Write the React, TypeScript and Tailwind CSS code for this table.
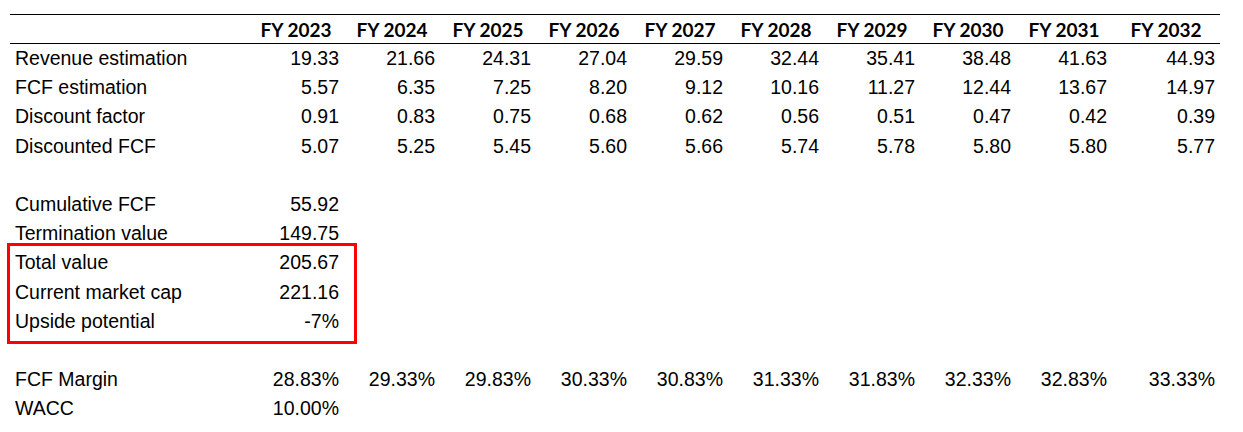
import React from "react";

const years = ["FY 2023", "FY 2024", "FY 2025", "FY 2026", "FY 2027", "FY 2028", "FY 2029", "FY 2030", "FY 2031", "FY 2032"];

const rows: (string | null)[][] = [
  ["Revenue estimation", "19.33", "21.66", "24.31", "27.04", "29.59", "32.44", "35.41", "38.48", "41.63", "44.93"],
  ["FCF estimation", "5.57", "6.35", "7.25", "8.20", "9.12", "10.16", "11.27", "12.44", "13.67", "14.97"],
  ["Discount factor", "0.91", "0.83", "0.75", "0.68", "0.62", "0.56", "0.51", "0.47", "0.42", "0.39"],
  ["Discounted FCF", "5.07", "5.25", "5.45", "5.60", "5.66", "5.74", "5.78", "5.80", "5.80", "5.77"],
  [],
  ["Cumulative FCF", "55.92"],
  ["Termination value", "149.75"],
  ["Total value", "205.67"],
  ["Current market cap", "221.16"],
  ["Upside potential", "-7%"],
  [],
  ["FCF Margin", "28.83%", "29.33%", "29.83%", "30.33%", "30.83%", "31.33%", "31.83%", "32.33%", "32.83%", "33.33%"],
  ["WACC", "10.00%"],
];

export default function App() {
  return (
    <div className="relative w-[1243px] h-[432px] bg-white text-black font-['Liberation_Sans',Arial,sans-serif] text-[19.5px]">
      <div className="pl-[10px] pt-[14px]">
        <div className="w-[1210px]">
          <div className="grid grid-cols-[238px_repeat(9,96px)_108px] border-t border-b border-black h-[30px] items-center font-bold font-['Lato',sans-serif] text-[19px]">
            <div />
            {years.map((y) => (
              <div key={y} className="text-center pt-[1px]">{y}</div>
            ))}
          </div>
          {rows.map((r, i) => (
            <div key={i} className="grid grid-cols-[238px_repeat(9,96px)_108px] h-[29.2px] items-center">
              {r.length > 0 && <div className="pl-[5px]">{r[0]}</div>}
              {r.slice(1).map((v, j) => (
                <div key={j} className="text-right pr-[5px]">{v}</div>
              ))}
            </div>
          ))}
        </div>
      </div>
      <div className="absolute left-[7px] top-[243px] w-[350px] h-[101px] border-[3px] border-[#ff0000]" />
    </div>
  );
}
